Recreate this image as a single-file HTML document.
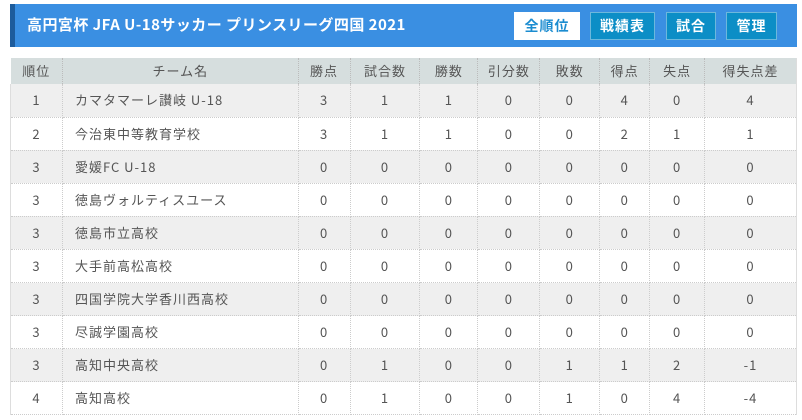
<!DOCTYPE html>
<html><head><meta charset="utf-8"><style>
*{margin:0;padding:0;box-sizing:border-box}
body{width:802px;height:420px;background:#fff;font-family:"Noto Sans CJK JP","Liberation Sans",sans-serif;position:relative;overflow:hidden}
.hd{position:absolute;left:10px;top:4px;width:787px;height:43px;background:#3a8fe2;border-left:5px solid #1d5c9c}
.hd h1{position:absolute;left:12px;top:11px;font-size:15px;line-height:20px;color:#fff;font-weight:bold;letter-spacing:0.45px}
.b{position:absolute;top:8px;height:28px;background:#0c8ec6;border:1px solid #6cb8dc;color:#fff;font-size:14px;font-weight:bold;text-align:center;line-height:26px;letter-spacing:1px}
.b.w{background:#fff;color:#1b8cd0;border-color:#fff}
table{position:absolute;left:10px;top:58px;width:787px;border-collapse:collapse;font-size:13px;color:#555;letter-spacing:1px}
th{background:#d6dede;height:26px;font-weight:normal;color:#555;border-right:1px dotted #bbb;font-size:13px;line-height:16px}
td{height:33.1px;text-align:center;border-right:1px dotted #ccc;border-bottom:1px dotted #ccc;line-height:16px}
tr td:first-child{border-left:1px solid #ddd}
td:last-child,th:last-child{border-right:1px solid #ddd}
td.n{text-align:left;padding-left:12px}
tbody tr:nth-child(odd) td{background:#efefef}
</style></head><body>
<div class="hd"><h1>高円宮杯 JFA U-18サッカー プリンスリーグ四国 2021</h1>
<div class="b w" style="left:499px;width:66px">全順位</div>
<div class="b" style="left:575px;width:65px">戦績表</div>
<div class="b" style="left:651px;width:50px">試合</div>
<div class="b" style="left:711px;width:51px">管理</div>
</div>
<table>
<colgroup><col style="width:52px"><col style="width:236px"><col style="width:52px"><col style="width:70px"><col style="width:58px"><col style="width:62px"><col style="width:60px"><col style="width:50px"><col style="width:55px"><col style="width:92px"></colgroup>
<thead><tr><th>順位</th><th>チーム名</th><th>勝点</th><th>試合数</th><th>勝数</th><th>引分数</th><th>敗数</th><th>得点</th><th>失点</th><th>得失点差</th></tr></thead>
<tbody>
<tr><td>1</td><td class="n">カマタマーレ讃岐 U-18</td><td>3</td><td>1</td><td>1</td><td>0</td><td>0</td><td>4</td><td>0</td><td>4</td></tr>
<tr><td>2</td><td class="n">今治東中等教育学校</td><td>3</td><td>1</td><td>1</td><td>0</td><td>0</td><td>2</td><td>1</td><td>1</td></tr>
<tr><td>3</td><td class="n">愛媛FC U-18</td><td>0</td><td>0</td><td>0</td><td>0</td><td>0</td><td>0</td><td>0</td><td>0</td></tr>
<tr><td>3</td><td class="n">徳島ヴォルティスユース</td><td>0</td><td>0</td><td>0</td><td>0</td><td>0</td><td>0</td><td>0</td><td>0</td></tr>
<tr><td>3</td><td class="n">徳島市立高校</td><td>0</td><td>0</td><td>0</td><td>0</td><td>0</td><td>0</td><td>0</td><td>0</td></tr>
<tr><td>3</td><td class="n">大手前高松高校</td><td>0</td><td>0</td><td>0</td><td>0</td><td>0</td><td>0</td><td>0</td><td>0</td></tr>
<tr><td>3</td><td class="n">四国学院大学香川西高校</td><td>0</td><td>0</td><td>0</td><td>0</td><td>0</td><td>0</td><td>0</td><td>0</td></tr>
<tr><td>3</td><td class="n">尽誠学園高校</td><td>0</td><td>0</td><td>0</td><td>0</td><td>0</td><td>0</td><td>0</td><td>0</td></tr>
<tr><td>3</td><td class="n">高知中央高校</td><td>0</td><td>1</td><td>0</td><td>0</td><td>1</td><td>1</td><td>2</td><td>-1</td></tr>
<tr><td>4</td><td class="n">高知高校</td><td>0</td><td>1</td><td>0</td><td>0</td><td>1</td><td>0</td><td>4</td><td>-4</td></tr>
</tbody></table>
</body></html>
